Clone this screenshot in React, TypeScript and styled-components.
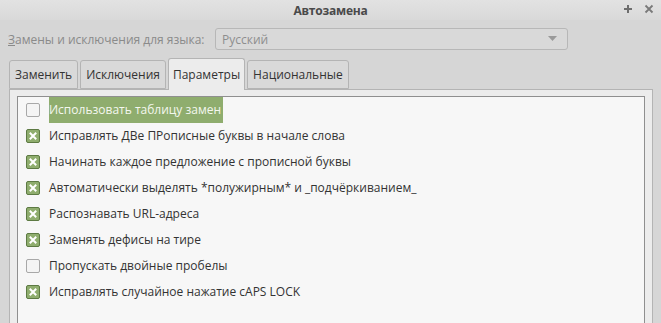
import React from "react";
import styled, { createGlobalStyle } from "styled-components";

const Global = createGlobalStyle`
  html, body { margin: 0; padding: 0; }
  body {
    width: 661px; height: 323px; overflow: hidden;
    background: #d6d6d6;
    font-family: "Open Sans", "Noto Sans", sans-serif;
    font-size: 12px;
    color: #3c3c3c;
  }
`;

const Window = styled.div`
  width: 661px;
  height: 323px;
  display: flex;
  flex-direction: column;
  background: #d6d6d6;
`;

const TitleBar = styled.div`
  height: 20px;
  flex: none;
  display: flex;
  align-items: center;
  justify-content: center;
  position: relative;
  background: linear-gradient(#e2e2e2, #d9d9d9);
`;

const Title = styled.div`
  font-weight: 700;
  font-size: 12px;
  letter-spacing: -0.2px;
  color: #4a4a4a;
`;

const TitleButtons = styled.div`
  position: absolute;
  right: 7px;
  top: 0;
  height: 18px;
  display: flex;
  align-items: center;
  gap: 11px;
`;

const LangRow = styled.div`
  flex: none;
  display: flex;
  align-items: center;
  padding: 8px 0 0 8px;
  height: 22px;
`;

const Label = styled.span`
  color: #8a8a8a;
  width: 207px;
  white-space: nowrap;
  u { text-decoration: underline; }
`;

const Combo = styled.div`
  width: 353px;
  height: 22px;
  box-sizing: border-box;
  border: 1px solid #b7b7b7;
  border-radius: 3px;
  background: #d9d9d9;
  display: flex;
  align-items: center;
  justify-content: space-between;
  padding: 0 10px 0 6px;
  color: #8e8e8e;
`;

const TabStrip = styled.div`
  flex: none;
  display: flex;
  align-items: flex-end;
  padding: 0 0 0 9px;
  height: 39px;
  gap: 2px;
  position: relative;
  z-index: 1;
`;

const Tab = styled.div<{ $active?: boolean }>`
  height: ${(p) => (p.$active ? "32px" : "29px")};
  margin-bottom: ${(p) => (p.$active ? "-1px" : "0")};
  box-sizing: border-box;
  padding: 0 ${(p) => (p.$active ? "4px" : "5px")};
  display: flex;
  align-items: center;
  border: 1px solid #b4b4b4;
  border-bottom: ${(p) => (p.$active ? "none" : "1px solid #b4b4b4")};
  border-radius: 3px 3px 0 0;
  background: ${(p) => (p.$active ? "#ececec" : "#d9d9d9")};
  color: #333333;
  white-space: nowrap;
`;

const Panel = styled.div`
  margin: 0 8px 0 9px;
  flex: 1;
  background: #ececec;
  border: 1px solid #b4b4b4;
  border-bottom: none;
  padding: 6px 7px 0 7px;
  display: flex;
`;

const List = styled.div`
  flex: 1;
  background: #f7f7f7;
  border: 1px solid #8f8f8f;
  border-bottom: none;
  padding: 0 0 0 8px;
  display: flex;
  flex-direction: column;
`;

const Row = styled.div`
  height: 26px;
  display: flex;
  align-items: center;
`;

const Box = styled.div<{ $checked?: boolean }>`
  width: 14px;
  height: 14px;
  box-sizing: border-box;
  border-radius: 2px;
  border: 1px solid ${(p) => (p.$checked ? "#5d7a43" : "#a8a8a8")};
  background: ${(p) => (p.$checked ? "#8fad6e" : "#f4f4f4")};
  display: flex;
  align-items: center;
  justify-content: center;
  margin-right: 9px;
  flex: none;
`;

const RowText = styled.span<{ $selected?: boolean }>`
  height: 26px;
  line-height: 26px;
  padding-right: ${(p) => (p.$selected ? "2px" : "0")};
  background: ${(p) => (p.$selected ? "#8fad6e" : "transparent")};
  color: ${(p) => (p.$selected ? "#f4f7ef" : "#333333")};
  white-space: nowrap;
`;

const Check = () => (
  <svg width="8" height="8" viewBox="0 0 8 8">
    <path d="M1.5 1.5 L6.5 6.5 M6.5 1.5 L1.5 6.5" stroke="#ffffff" strokeWidth="2" strokeLinecap="square" />
  </svg>
);

const items: { text: string; checked: boolean; selected?: boolean }[] = [
  { text: "Использовать таблицу замен", checked: false, selected: true },
  { text: "Исправлять ДВе ПРописные буквы в начале слова", checked: true },
  { text: "Начинать каждое предложение с прописной буквы", checked: true },
  { text: "Автоматически выделять *полужирным* и _подчёркиванием_", checked: true },
  { text: "Распознавать URL-адреса", checked: true },
  { text: "Заменять дефисы на тире", checked: true },
  { text: "Пропускать двойные пробелы", checked: false },
  { text: "Исправлять случайное нажатие cAPS LOCK", checked: true },
];

export default function App() {
  return (
    <>
      <Global />
      <Window>
        <TitleBar>
          <Title>Автозамена</Title>
          <TitleButtons>
            <svg width="10" height="10" viewBox="0 0 10 10">
              <path d="M5 1 V9 M1 5 H9" stroke="#6e6e6e" strokeWidth="2" />
            </svg>
            <svg width="10" height="10" viewBox="0 0 10 10">
              <path d="M1.5 1.5 L8.5 8.5 M8.5 1.5 L1.5 8.5" stroke="#7a7a7a" strokeWidth="1.8" />
            </svg>
          </TitleButtons>
        </TitleBar>
        <LangRow>
          <Label>
            <u>З</u>амены и исключения для языка:
          </Label>
          <Combo>
            <span>Русский</span>
            <svg width="9" height="6" viewBox="0 0 9 6">
              <path d="M0 0 H9 L4.5 5 Z" fill="#9a9a9a" />
            </svg>
          </Combo>
        </LangRow>
        <TabStrip>
          <Tab>Заменить</Tab>
          <Tab>Исключения</Tab>
          <Tab $active>Параметры</Tab>
          <Tab>Национальные</Tab>
        </TabStrip>
        <Panel>
          <List>
            {items.map((it) => (
              <Row key={it.text}>
                <Box $checked={it.checked}>{it.checked && <Check />}</Box>
                <RowText $selected={it.selected}>{it.text}</RowText>
              </Row>
            ))}
          </List>
        </Panel>
      </Window>
    </>
  );
}
